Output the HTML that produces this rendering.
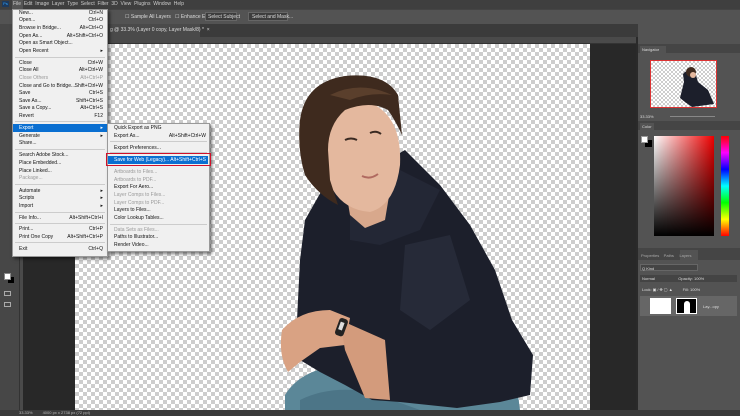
<!DOCTYPE html>
<html><head><style>
*{margin:0;padding:0;box-sizing:border-box}
body{width:740px;height:416px;overflow:hidden;background:#535353;font-family:"Liberation Sans",sans-serif;position:relative}
.a{position:absolute}
.chk{background-color:#fff;background-image:linear-gradient(45deg,#cdcdcd 25%,transparent 25%,transparent 75%,#cdcdcd 75%),linear-gradient(45deg,#cdcdcd 25%,transparent 25%,transparent 75%,#cdcdcd 75%);background-size:8px 8px;background-position:0 0,4px 4px}
.m{position:absolute;font-size:5px;color:#111;white-space:nowrap;line-height:7px}
.m span{position:absolute;left:0}
.m b{font-weight:normal;position:absolute}
.g{color:#999}
.sep{position:absolute;height:1px;background:#ccc}
.w{color:#ddd;font-size:5px;position:absolute;white-space:nowrap}
</style></head><body>
<!-- menu bar -->
<div class="a" style="left:0;top:0;width:740px;height:9px;background:#3f3f3f"></div>
<div class="a" style="left:2px;top:1px;width:7px;height:6px;background:#1d3a5e;color:#31a8ff;font-size:4px;line-height:6px;text-align:center">Ps</div>
<div class="a" style="left:12px;top:0;width:11px;height:9px;background:#555"></div>
<div class="w" style="left:13px;top:1px;color:#ccc">File&nbsp;&nbsp;Edit&nbsp;&nbsp;Image&nbsp;&nbsp;Layer&nbsp;&nbsp;Type&nbsp;&nbsp;Select&nbsp;&nbsp;Filter&nbsp;&nbsp;3D&nbsp;&nbsp;View&nbsp;&nbsp;Plugins&nbsp;&nbsp;Window&nbsp;&nbsp;Help</div>
<!-- options bar -->
<div class="a" style="left:0;top:9px;width:740px;height:15px;background:#535353;border-top:1px solid #444"></div>
<div class="w" style="left:125px;top:14px">☐ Sample All Layers&nbsp;&nbsp;&nbsp;☐ Enhance Edge</div>
<div class="a" style="left:205px;top:12px;width:32px;height:9px;background:#3d3d3d;border:1px solid #666"></div>
<div class="w" style="left:208px;top:14px">Select Subject</div>
<div class="a" style="left:248px;top:12px;width:40px;height:9px;background:#3d3d3d;border:1px solid #666"></div>
<div class="w" style="left:252px;top:14px">Select and Mask...</div>
<!-- tab bar -->
<div class="a" style="left:20px;top:24px;width:618px;height:13px;background:#3b3b3b"></div>
<div class="a" style="left:105px;top:24px;width:95px;height:13px;background:#4a4a4a"></div>
<div class="w" style="left:110px;top:27px">g @ 33.3% (Layer 0 copy, Layer Mask/8) * &nbsp;×</div>
<!-- ruler -->
<div class="a" style="left:20px;top:37px;width:618px;height:7px;background:#4a4a4a;border-bottom:1px solid #333"></div>
<!-- left toolbar -->
<div class="a" style="left:0;top:24px;width:20px;height:386px;background:#474747;border-right:1px solid #333"></div>
<div class="a" style="left:20px;top:44px;width:3px;height:366px;background:#4a4a4a"></div>
<div class="a" style="left:8px;top:277px;width:6px;height:6px;background:#000"></div>
<div class="a" style="left:4px;top:273px;width:7px;height:7px;background:#fff;border:1px solid #888"></div>
<div class="a" style="left:4px;top:291px;width:7px;height:5px;border:1px solid #aaa"></div>
<div class="a" style="left:4px;top:302px;width:7px;height:5px;border:1px solid #aaa"></div>
<!-- dark pasteboard -->
<div class="a" style="left:23px;top:44px;width:615px;height:366px;background:#282828"></div>
<!-- canvas -->
<div class="a chk" style="left:75px;top:44px;width:515px;height:366px"></div>
<svg class="a" style="left:0;top:0" width="740" height="416">
<path d="M285 395 Q300 370 340 365 L420 372 Q480 365 515 372 L520 410 L285 410Z" fill="#5b8798"/>
<path d="M300 400 Q330 385 370 392 L420 410 L300 410Z" fill="#4c7587"/>
<path d="M322 190 L360 175 L405 150 L440 185 L470 225 L495 270 L512 320 L533 355 L530 395 L500 402 L457 408 L400 402 L372 400 L345 385 L320 372 L300 360 L297 320 L300 260 L305 220Z" fill="#1c1f2b"/>
<path d="M350 200 L400 170 L440 190 L420 230 L380 245 L350 240Z" fill="#232735"/>
<path d="M405 245 L450 235 L470 300 L430 330 L400 310Z" fill="#262a38"/>
<path d="M345 185 L390 190 L385 220 L365 228 L350 215Z" fill="#d8a88c"/>
<path d="M324 118 Q340 100 375 105 Q402 120 400 165 Q395 205 370 212 Q345 210 333 190 Q322 165 324 118Z" fill="#e4b89e"/>
<path d="M345 140 q6 -3 12 0" stroke="#3a2a22" stroke-width="2" fill="none"/>
<path d="M370 133 q6 -3 11 1" stroke="#3a2a22" stroke-width="2" fill="none"/>
<path d="M362 176 q8 4 16 -2" stroke="#b06a60" stroke-width="2" fill="none"/>
<path d="M300 120 Q305 82 345 76 Q385 72 398 95 L402 135 Q395 120 388 110 Q370 100 345 110 Q328 125 328 150 L330 180 L338 205 Q318 195 305 175 Q297 150 300 120Z" fill="#3e2a1e"/>
<path d="M330 95 Q360 80 392 95 Q370 92 350 100Z" fill="#5a3f2c"/>
<path d="M282 330 Q300 310 330 310 L350 318 L345 345 L320 348 L300 362 L288 372 Q278 355 282 330Z" fill="#d9a283"/>
<path d="M340 320 L385 340 L390 400 L365 398 L345 350Z" fill="#d39b7c"/>
<rect x="337" y="318" width="9" height="18" rx="3" fill="#222" transform="rotate(20 341 327)"/>
<rect x="339" y="322" width="4" height="8" fill="#ddd" transform="rotate(20 341 327)"/>
</svg>
<!-- status bar -->
<div class="a" style="left:0;top:410px;width:740px;height:6px;background:#3a3a3a"></div>
<div class="w" style="left:19px;top:410px;font-size:4px;color:#bbb">33.33% &nbsp;&nbsp;&nbsp;&nbsp;&nbsp;&nbsp;&nbsp; 4000 px x 2738 px (72 ppi)</div>
<!-- right panel -->
<div class="a" style="left:636px;top:37px;width:104px;height:373px;background:#535353;border-left:2px solid #2a2a2a"></div>
<div class="a" style="left:638px;top:44px;width:102px;height:9px;background:#454545"></div>
<div class="a" style="left:640px;top:46px;width:26px;height:7px;background:#535353"></div>
<div class="w" style="left:642px;top:47px;font-size:4px">Navigator</div>
<div class="a chk" style="left:650px;top:60px;width:67px;height:48px;border:1px solid #d33;background-size:4px 4px;background-position:0 0,2px 2px"></div>
<svg class="a" style="left:650px;top:60px" width="67" height="48"><path d="M33 14 Q38 8 45 12 L48 22 L58 30 L64 44 L42 47 L35 42 L30 38 L34 22Z" fill="#1c1f2b"/><circle cx="41" cy="12" r="5" fill="#3e2a1e"/><circle cx="43" cy="15" r="3" fill="#e4b89e"/></svg>
<div class="w" style="left:640px;top:114px;font-size:4px">33.33%</div>
<div class="a" style="left:670px;top:116px;width:45px;height:1px;background:#888"></div>
<div class="a" style="left:638px;top:121px;width:102px;height:9px;background:#454545"></div>
<div class="a" style="left:640px;top:123px;width:14px;height:7px;background:#535353"></div>
<div class="w" style="left:642px;top:124px;font-size:4px">Color</div>
<div class="a" style="left:645px;top:140px;width:7px;height:7px;background:#000"></div>
<div class="a" style="left:641px;top:136px;width:7px;height:7px;background:#fff;border:1px solid #999"></div>
<div class="a" style="left:654px;top:136px;width:60px;height:100px;background:linear-gradient(to top,#000,transparent),linear-gradient(to right,#fff,#e00)"></div>
<div class="a" style="left:721px;top:136px;width:8px;height:100px;background:linear-gradient(#f00,#f0f,#00f,#0ff,#0f0,#ff0,#f00)"></div>
<div class="a" style="left:638px;top:248px;width:102px;height:12px;background:#454545"></div>
<div class="a" style="left:680px;top:250px;width:18px;height:10px;background:#535353"></div>
<div class="w" style="left:641px;top:253px;font-size:4px;color:#aaa">Properties&nbsp;&nbsp;&nbsp;&nbsp;Paths&nbsp;&nbsp;&nbsp;&nbsp;&nbsp;Layers</div>
<div class="a" style="left:640px;top:264px;width:58px;height:7px;background:#444;border:1px solid #666"></div>
<div class="w" style="left:642px;top:266px;font-size:4px">Q Kind</div>
<div class="a" style="left:640px;top:275px;width:97px;height:7px;background:#444"></div>
<div class="w" style="left:642px;top:276px;font-size:4px">Normal&nbsp;&nbsp;&nbsp;&nbsp;&nbsp;&nbsp;&nbsp;&nbsp;&nbsp;&nbsp;&nbsp;&nbsp;&nbsp;&nbsp;&nbsp;&nbsp;&nbsp;&nbsp;&nbsp;&nbsp;&nbsp;Opacity: 100%</div>
<div class="w" style="left:642px;top:287px;font-size:4px">Lock: ▣ ⁄ ✥ ▢ ▲&nbsp;&nbsp;&nbsp;&nbsp;&nbsp;&nbsp;&nbsp;&nbsp;&nbsp;Fill: 100%</div>
<div class="a" style="left:640px;top:296px;width:97px;height:20px;background:#666"></div>
<div class="a" style="left:650px;top:298px;width:21px;height:16px;background:#fff"></div>
<div class="a" style="left:676px;top:298px;width:21px;height:16px;background:#000;border:1px solid #fff"></div>
<div class="a" style="left:684px;top:301px;width:6px;height:12px;background:#fff;border-radius:3px 3px 0 0"></div>
<div class="w" style="left:703px;top:304px;font-size:4px">Lay...opy</div>
<!-- File menu -->
<div class="a" style="left:12px;top:9px;width:96px;height:248px;background:#f0f0f0;border:1px solid #999;box-shadow:2px 2px 3px rgba(0,0,0,.5)"></div>
<div class="a" style="left:13px;top:124px;width:94px;height:8px;background:#0a6fd1"></div>
<div class="m" style="left:19px;top:0;width:84px">
<span style="top:10px">New...</span><b style="right:0;top:10px">Ctrl+N</b>
<span style="top:17px">Open...</span><b style="right:0;top:17px">Ctrl+O</b>
<span style="top:25px">Browse in Bridge...</span><b style="right:0;top:25px">Alt+Ctrl+O</b>
<span style="top:33px">Open As...</span><b style="right:0;top:33px">Alt+Shift+Ctrl+O</b>
<span style="top:40px">Open as Smart Object...</span>
<span style="top:48px">Open Recent</span><b style="right:0;top:48px">▸</b>
<span style="top:60px">Close</span><b style="right:0;top:60px">Ctrl+W</b>
<span style="top:67px">Close All</span><b style="right:0;top:67px">Alt+Ctrl+W</b>
<span class="g" style="top:75px">Close Others</span><b class="g" style="right:0;top:75px">Alt+Ctrl+P</b>
<span style="top:83px">Close and Go to Bridge...</span><b style="right:0;top:83px">Shift+Ctrl+W</b>
<span style="top:90px">Save</span><b style="right:0;top:90px">Ctrl+S</b>
<span style="top:98px">Save As...</span><b style="right:0;top:98px">Shift+Ctrl+S</b>
<span style="top:105px">Save a Copy...</span><b style="right:0;top:105px">Alt+Ctrl+S</b>
<span style="top:113px">Revert</span><b style="right:0;top:113px">F12</b>
<span style="top:125px;color:#fff">Export</span><b style="right:0;top:125px;color:#fff">▸</b>
<span style="top:133px">Generate</span><b style="right:0;top:133px">▸</b>
<span style="top:140px">Share...</span>
<span style="top:152px">Search Adobe Stock...</span>
<span style="top:160px">Place Embedded...</span>
<span style="top:168px">Place Linked...</span>
<span class="g" style="top:175px">Package...</span>
<span style="top:188px">Automate</span><b style="right:0;top:188px">▸</b>
<span style="top:195px">Scripts</span><b style="right:0;top:195px">▸</b>
<span style="top:203px">Import</span><b style="right:0;top:203px">▸</b>
<span style="top:215px">File Info...</span><b style="right:0;top:215px">Alt+Shift+Ctrl+I</b>
<span style="top:226px">Print...</span><b style="right:0;top:226px">Ctrl+P</b>
<span style="top:234px">Print One Copy</span><b style="right:0;top:234px">Alt+Shift+Ctrl+P</b>
<span style="top:246px">Exit</span><b style="right:0;top:246px">Ctrl+Q</b>
</div>
<div class="sep" style="left:15px;top:57px;width:90px"></div>
<div class="sep" style="left:15px;top:121px;width:90px"></div>
<div class="sep" style="left:15px;top:149px;width:90px"></div>
<div class="sep" style="left:15px;top:184px;width:90px"></div>
<div class="sep" style="left:15px;top:212px;width:90px"></div>
<div class="sep" style="left:15px;top:223px;width:90px"></div>
<div class="sep" style="left:15px;top:242px;width:90px"></div>
<!-- submenu -->
<div class="a" style="left:107px;top:123px;width:103px;height:129px;background:#f0f0f0;border:1px solid #999;box-shadow:2px 2px 3px rgba(0,0,0,.5)"></div>
<div class="a" style="left:106px;top:153px;width:105px;height:13px;border:1.5px solid #d0102a"></div>
<div class="a" style="left:108px;top:156px;width:100px;height:8px;background:#0a6fd1"></div>
<div class="m" style="left:114px;top:0;width:92px">
<span style="top:125px">Quick Export as PNG</span>
<span style="top:133px">Export As...</span><b style="right:0;top:133px">Alt+Shift+Ctrl+W</b>
<span style="top:145px">Export Preferences...</span>
<span style="top:157px;color:#fff">Save for Web (Legacy)...</span><b style="right:0;top:157px;color:#fff">Alt+Shift+Ctrl+S</b>
<span class="g" style="top:169px">Artboards to Files...</span>
<span class="g" style="top:177px">Artboards to PDF...</span>
<span style="top:184px">Export For Aero...</span>
<span class="g" style="top:192px">Layer Comps to Files...</span>
<span class="g" style="top:200px">Layer Comps to PDF...</span>
<span style="top:207px">Layers to Files...</span>
<span style="top:215px">Color Lookup Tables...</span>
<span class="g" style="top:227px">Data Sets as Files...</span>
<span style="top:234px">Paths to Illustrator...</span>
<span style="top:242px">Render Video...</span>
</div>
<div class="sep" style="left:110px;top:141px;width:97px"></div>
<div class="sep" style="left:110px;top:152px;width:97px"></div>
<div class="sep" style="left:110px;top:224px;width:97px"></div>
</body></html>
